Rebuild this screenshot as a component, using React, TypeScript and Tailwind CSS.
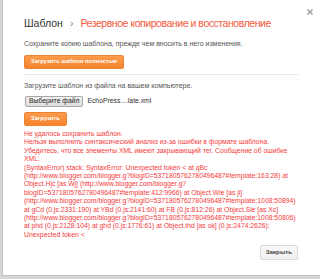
export default function App() {
  const errorLines = [
    'Не удалось сохранить шаблон.',
    'Нельзя выполнить синтаксический анализ из-за ошибки в формате шаблона.',
    'Убедитесь, что все элементы XML имеют закрывающий тег. Сообщение об ошибке',
    'XML:',
    '(SyntaxError) stack: SyntaxError: Unexpected token < at qBc',
    '(http://www.blogger.com/blogger.g?blogID=5371805762780496487#template:163:28) at',
    'Object.Hjc [as Wj] (http://www.blogger.com/blogger.g?',
    'blogID=5371805762780496487#template:412:9966) at Object.Wle [as ji]',
    '(http://www.blogger.com/blogger.g?blogID=5371805762780496487#template:1008:50894)',
    'at gCd (0.js:2331:190) at YBd (0.js:2141:60) at FB (0.js:812:26) at Object.Sle [as Xc]',
    '(http://www.blogger.com/blogger.g?blogID=5371805762780496487#template:1008:50806)',
    'at phd (0.js:2128:104) at ghd (0.js:1776:61) at Object.thd [as ok] (0.js:2474:2626):',
    'Unexpected token <',
  ];

  return (
    <div className="w-[320px] h-[279px] overflow-hidden bg-[#d6d6d6] font-['Liberation_Sans',Arial,sans-serif]">
      <div className="ml-[2px] w-[318px] h-[276px] bg-white border-l border-b border-[#c4c4c4] flex flex-col pl-[21px] pr-[22px]">
        {/* close */}
        <div className="flex justify-end pt-[9px] -mr-[15px] h-[16px]">
          <svg width="6" height="6" viewBox="0 0 6 6">
            <path d="M0.5 0.5 L5.5 5.5 M5.5 0.5 L0.5 5.5" stroke="#9a9a9a" strokeWidth="1.4" />
          </svg>
        </div>

        <div className="h-[14px] leading-[14px] text-[10.5px] whitespace-nowrap flex">
          <span className="text-[#333]">Шаблон</span>
          <span className="text-[#888] ml-[7px] mr-[7px]">›</span>
          <span className="text-[#f4593b] tracking-[-0.45px]">Резервное копирование и восстановление</span>
        </div>

        <div className="mt-[9px] text-[7px] leading-[9px] text-[#555] whitespace-nowrap">
          Сохраните копию шаблона, прежде чем вносить в него изменения.
        </div>

        <div className="mt-[7px] flex">
          <button className="h-[14px] px-[6px] rounded-[2px] border border-[#ed8332] bg-gradient-to-b from-[#fb9c4c] to-[#f6832b] text-white text-[5.8px] font-bold leading-none">
            Загрузить шаблон полностью
          </button>
        </div>

        <div className="mt-[5px] h-px bg-[#e8e8e8]" />

        <div className="mt-[6px] text-[7px] leading-[9px] text-[#555] whitespace-nowrap">
          Загрузите шаблон из файла на вашем компьютере.
        </div>

        <div className="mt-[6px] flex items-center gap-[4px] ml-[1px]">
          <div className="h-[11px] px-[3px] flex items-center rounded-[2px] border border-[#a6a6a6] bg-gradient-to-b from-[#f2f2f2] to-[#dedede] text-[6.8px] text-[#222] leading-none">
            Выберите файл
          </div>
          <span className="text-[6.8px] text-[#333] leading-none">EchoPress....late.xml</span>
        </div>

        <div className="mt-[5px] flex">
          <button className="h-[14px] px-[6px] rounded-[2px] border border-[#ed8332] bg-gradient-to-b from-[#fb9c4c] to-[#f6832b] text-white text-[5.8px] font-bold leading-none">
            Загрузить
          </button>
        </div>

        <div className="mt-[4px] text-[6.8px] leading-[8.4px] text-[#f53b3b]">
          {errorLines.map((l, i) => (
            <div key={i} className="whitespace-nowrap">{l}</div>
          ))}
        </div>

        <div className="mt-auto mb-[15px] flex justify-end">
          <button className="h-[15px] px-[5px] rounded-[2px] border border-[#dadada] bg-gradient-to-b from-[#f9f9f9] to-[#f0f0f0] text-[6.2px] font-bold text-[#444] leading-none">
            Закрыть
          </button>
        </div>
      </div>
    </div>
  );
}
